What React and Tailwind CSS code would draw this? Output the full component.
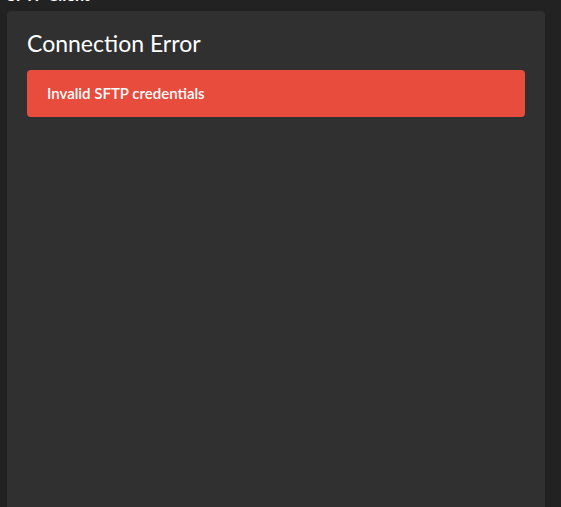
import React from "react";

export default function App() {
  return (
    <div
      className="min-h-screen bg-[#222222] overflow-hidden pl-[7px] pr-[16px]"
      style={{ fontFamily: "Lato, 'Noto Sans', sans-serif" }}
    >
      <h1 className="-mt-[15px] text-[16px] leading-[1.2] font-bold text-white">
        SFTP Client
      </h1>
      <div className="mt-[7px] min-h-[520px] rounded-[4px] bg-[#303030] px-[20px] pt-[19px]">
        <h2 className="text-[23px] leading-[1.2] font-normal text-white">
          Connection Error
        </h2>
        <div className="mt-[12px] rounded-[4px] bg-[#e84c3d] px-[20px] pt-[14px] pb-[15px]">
          <p className="text-[15px] leading-[18px] font-semibold text-white">
            Invalid SFTP credentials
          </p>
        </div>
      </div>
    </div>
  );
}
